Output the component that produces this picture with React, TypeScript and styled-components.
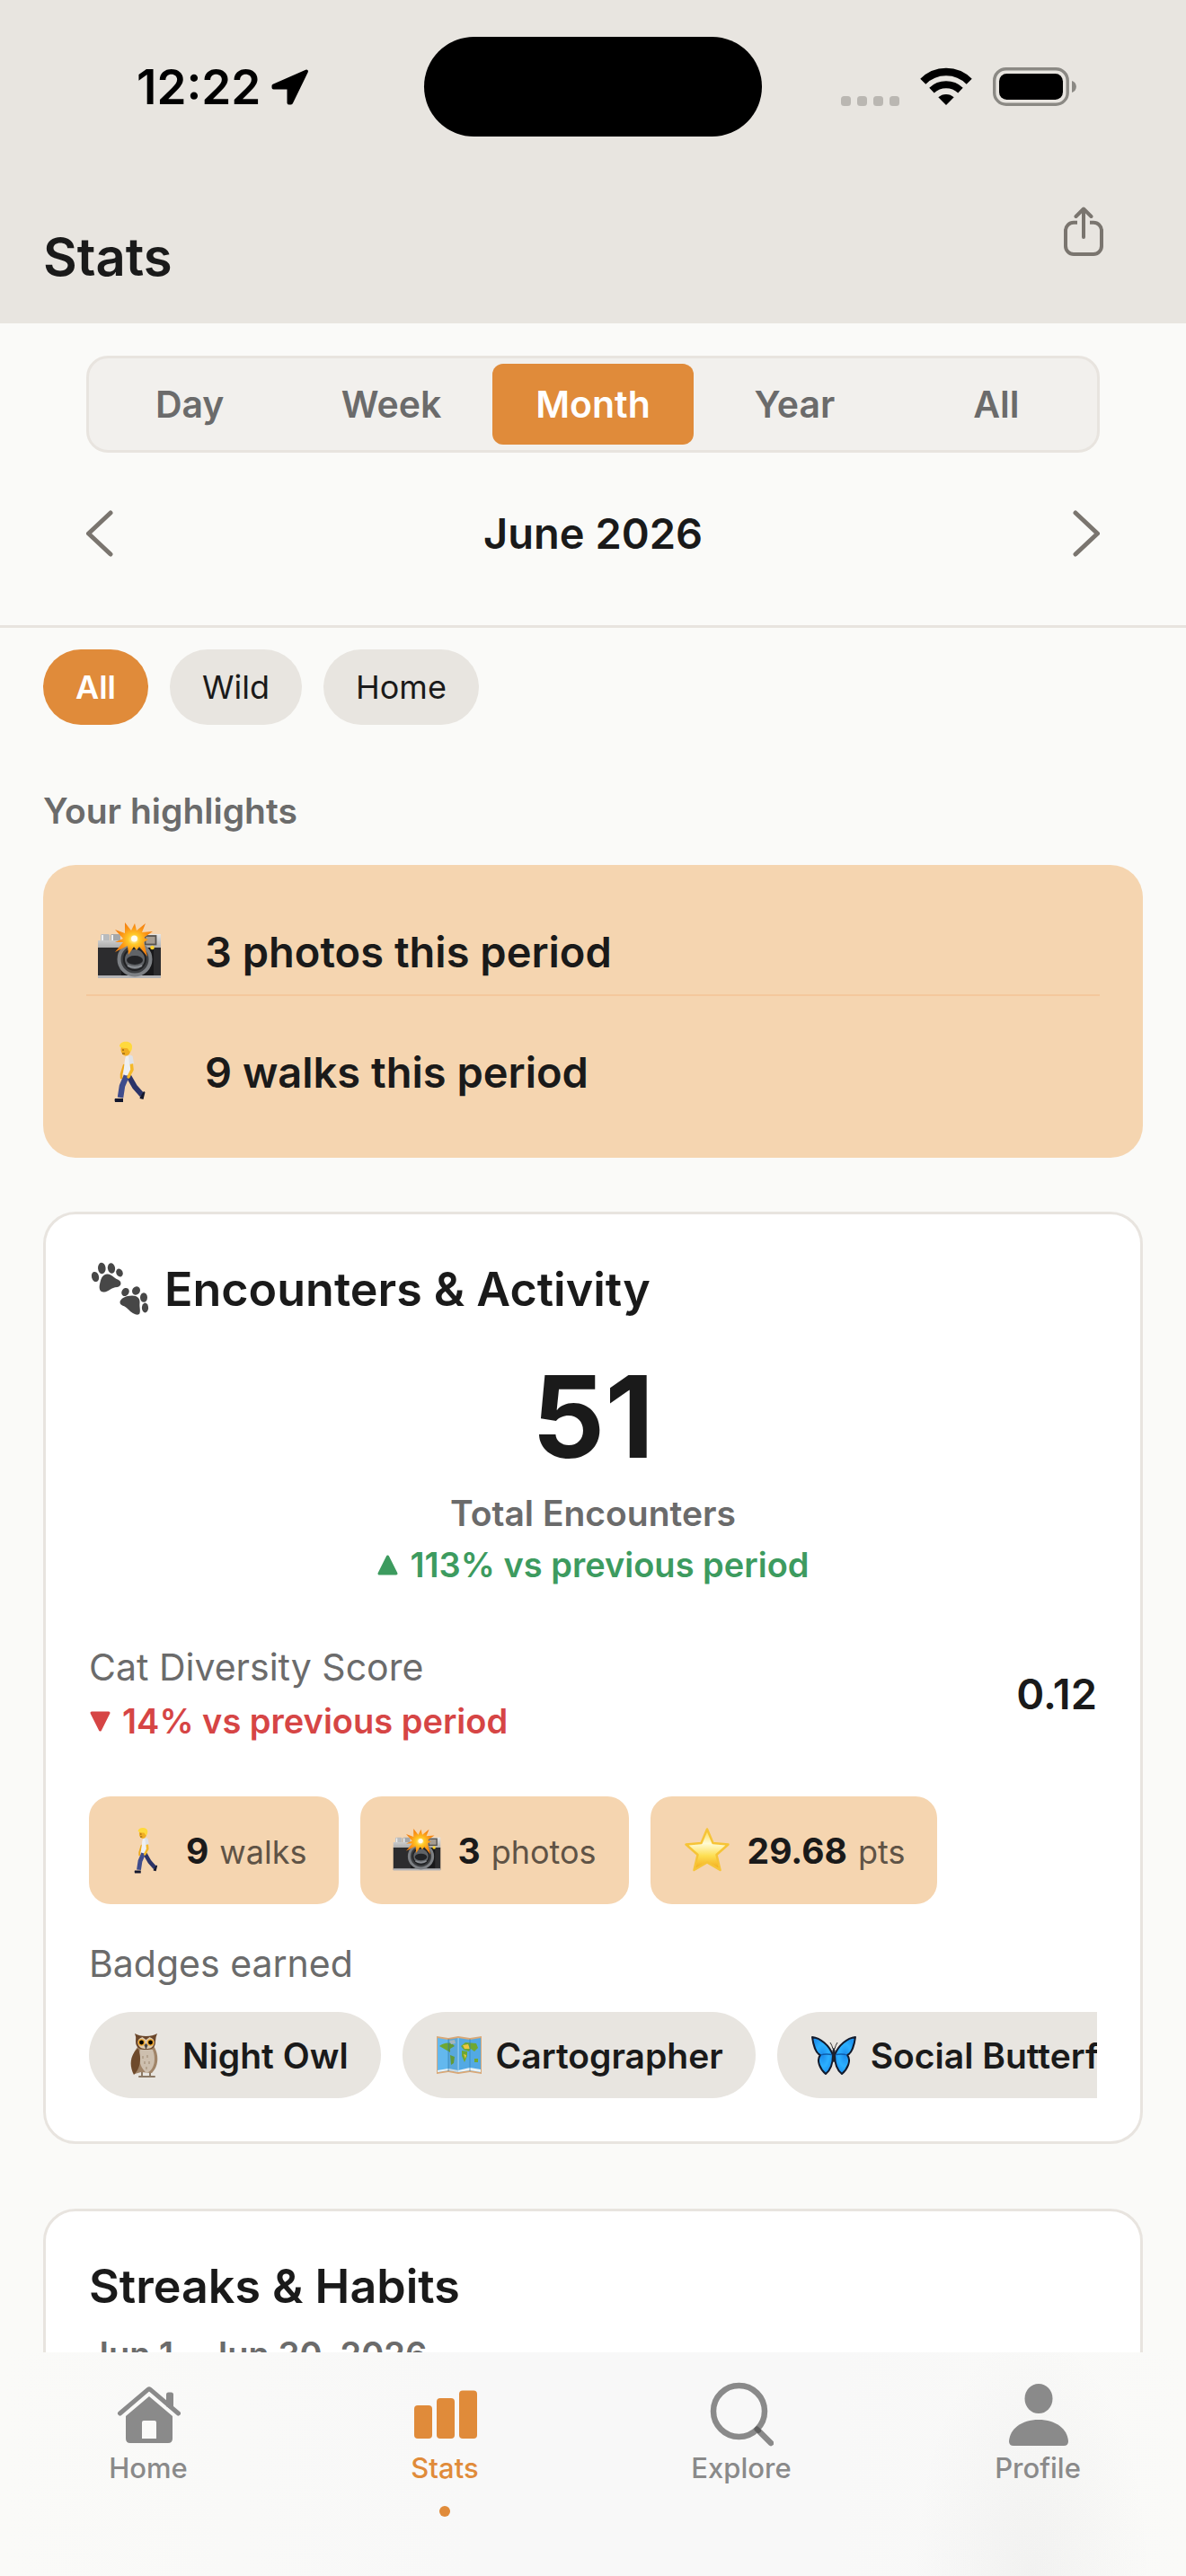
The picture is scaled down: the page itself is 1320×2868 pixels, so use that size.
import React, { useState } from "react";
import styled, { createGlobalStyle } from "styled-components";

const color = {
  page: "#fafaf8",
  bar: "#e8e5e0",
  line: "#e8e4df",
  track: "#f2f0ed",
  ink: "#1a1a1a",
  muted: "#6b6b6b",
  stone: "#7a756f",
  accent: "#e08b3a",
  peach: "#f5d5b0",
  tab: "#8a8a8a",
  up: "#3d9b5f",
  down: "#d64545",
};

const GlobalStyle = createGlobalStyle`
  * { box-sizing: border-box; }
  body {
    margin: 0;
    background: ${color.page};
    color: ${color.ink};
    font-family: Inter, "Liberation Sans", sans-serif;
  }
  button { font: inherit; border: 0; padding: 0; background: none; cursor: pointer; }
  h1, h2, p, ul { margin: 0; padding: 0; }
  ul { list-style: none; }
  svg { display: block; flex: none; }
`;

const Screen = styled.div`
  display: flex;
  flex-direction: column;
  height: 100vh;
`;

const StatusBar = styled.div`
  display: grid;
  grid-template-columns: 1fr 376px 1fr;
  align-items: center;
  padding-top: 41px;
  background: ${color.bar};
  color: #000;
`;

const Clock = styled.div`
  display: flex;
  align-items: center;
  gap: 12px;
  padding-left: 152px;
  font-size: 53px;
  line-height: 60px;
  font-weight: 600;
`;

const Island = styled.div`
  height: 111px;
  border-radius: 56px;
  background: #000;
`;

const StatusIcons = styled.div`
  display: flex;
  align-items: flex-end;
  justify-content: flex-end;
  gap: 23px;
  padding-right: 122px;
`;

const Header = styled.header`
  display: flex;
  justify-content: space-between;
  padding: 64px 72px 38px 48px;
  background: ${color.bar};
`;

const PageTitle = styled.h1`
  padding-top: 34px;
  font-size: 58px;
  line-height: 72px;
  font-weight: 600;
`;

const ShareButton = styled.button`
  display: grid;
  place-items: center;
  width: 84px;
  height: 84px;
  color: ${color.stone};
`;

const Scroll = styled.main`
  flex: 1;
  min-height: 0;
  overflow-y: auto;
  scrollbar-width: none;
`;

const PeriodPanel = styled.section`
  padding: 36px 96px 66px;
  border-bottom: 3px solid ${color.line};
`;

const Segments = styled.div`
  display: grid;
  grid-template-columns: repeat(5, 1fr);
  padding: 6px 0;
  border: 3px solid ${color.line};
  border-radius: 24px;
  background: ${color.track};
`;

const Segment = styled.button<{ $on: boolean }>`
  border-radius: 12px;
  font-size: 41px;
  line-height: 90px;
  font-weight: 600;
  color: ${(p) => (p.$on ? "#fff" : color.muted)};
  background: ${(p) => (p.$on ? color.accent : "transparent")};
`;

const PeriodNav = styled.div`
  display: flex;
  align-items: center;
  justify-content: space-between;
  margin-top: 54px;
  font-size: 47px;
  line-height: 72px;
  font-weight: 600;
`;

const StepButton = styled.button`
  color: ${color.stone};
`;

const Filters = styled.div`
  display: flex;
  gap: 24px;
  padding: 24px 48px 72px;
`;

const FilterChip = styled.button<{ $on: boolean }>`
  padding: 0 36px;
  border-radius: 42px;
  font-size: 36px;
  line-height: 84px;
  font-weight: ${(p) => (p.$on ? 600 : 400)};
  color: ${(p) => (p.$on ? "#fff" : color.ink)};
  background: ${(p) => (p.$on ? color.accent : color.bar)};
`;

const SectionLabel = styled.h2`
  padding: 0 48px;
  font-size: 39px;
  line-height: 48px;
  font-weight: 600;
  color: ${color.muted};
`;

const Highlights = styled.ul`
  display: grid;
  gap: 36px;
  margin: 36px 48px 60px;
  padding: 48px;
  border-radius: 36px;
  background: ${color.peach};
`;

const Highlight = styled.li`
  display: flex;
  align-items: center;
  gap: 36px;
  height: 96px;
  font-size: 47px;
  font-weight: 600;

  &:not(:last-child) {
    height: 98px;
    border-bottom: 2px solid #f4c89c;
  }
`;

const HighlightIcon = styled.span`
  display: grid;
  place-items: center;
  width: 96px;
`;

const Card = styled.section`
  margin: 0 48px 72px;
  padding: 48px;
  border: 3px solid ${color.line};
  border-radius: 36px;
  background: #fff;
`;

const CardTitle = styled.h2`
  display: flex;
  align-items: center;
  gap: 12px;
  font-size: 52px;
  line-height: 72px;
  font-weight: 600;
`;

const Total = styled.div`
  display: flex;
  flex-direction: column;
  align-items: center;
  margin: 30px 0 60px;
`;

const TotalNumber = styled.strong`
  font-size: 127px;
  line-height: 150px;
  font-weight: 700;
`;

const TotalLabel = styled.span`
  margin: 6px 0 3px;
  font-size: 39px;
  line-height: 54px;
  font-weight: 600;
  color: ${color.muted};
`;

const Change = styled.span<{ $up?: boolean }>`
  display: flex;
  align-items: center;
  gap: 12px;
  font-size: 38px;
  line-height: 54px;
  font-weight: 600;
  color: ${(p) => (p.$up ? color.up : color.down)};
`;

const ScoreRow = styled.div`
  display: flex;
  align-items: center;
  justify-content: space-between;
  margin-bottom: 57px;
`;

const ScoreText = styled.div`
  display: grid;
  gap: 6px;
`;

const SoftLabel = styled.p`
  font-size: 41px;
  line-height: 54px;
  color: ${color.muted};
`;

const ScoreValue = styled.strong`
  font-size: 47px;
  line-height: 54px;
  font-weight: 600;
`;

const StatPills = styled.ul`
  display: flex;
  gap: 24px;
  margin-bottom: 39px;
`;

const StatPill = styled.li`
  display: flex;
  align-items: center;
  gap: 18px;
  height: 120px;
  padding: 0 36px;
  border-radius: 24px;
  font-size: 36px;
  background: ${color.peach};
`;

const PillText = styled.span`
  display: flex;
  align-items: baseline;
  gap: 12px;
  color: #5f5346;
`;

const PillNumber = styled.strong`
  font-size: 39px;
  font-weight: 700;
  color: ${color.ink};
`;

const Badges = styled.ul`
  display: flex;
  gap: 24px;
  margin-top: 27px;
  overflow-x: auto;
  scrollbar-width: none;
`;

const Badge = styled.li`
  display: flex;
  flex: none;
  align-items: center;
  gap: 14px;
  height: 96px;
  padding: 0 36px;
  border-radius: 48px;
  font-size: 39px;
  font-weight: 600;
  white-space: nowrap;
  background: ${color.bar};
`;

const DateRange = styled.p`
  margin-top: 12px;
  font-size: 38px;
  line-height: 54px;
  font-weight: 600;
  color: ${color.muted};
`;

const TabBar = styled.nav`
  display: grid;
  grid-template-columns: repeat(4, 1fr);
  height: 249px;
  padding-top: 33px;
  background:
    radial-gradient(ellipse 10% 110% at 87% 100%, rgba(120, 120, 120, 0.06), transparent),
    linear-gradient(90deg, #fafaf8, #f8f8f8 40%, #f8f8f8 70%, #fafaf8);
`;

const Tab = styled.a<{ $on: boolean }>`
  display: flex;
  flex-direction: column;
  align-items: center;
  gap: 6px;
  font-size: 31px;
  line-height: 36px;
  font-weight: 500;
  text-decoration: none;
  color: ${(p) => (p.$on ? color.accent : color.tab)};
`;

const TabDot = styled.span`
  width: 12px;
  height: 12px;
  margin-top: 18px;
  border-radius: 6px;
  background: ${color.accent};
`;

const LocationArrow = () => (
  <svg width="42" height="40" viewBox="0 0 42 40" aria-hidden="true">
    <path d="M39 2.500 2.500 18.500v2H19.500V37.500h2.500Z" fill="#000" stroke="#000" strokeWidth="4" strokeLinejoin="round" />
  </svg>
);

const SignalDots = () => (
  <svg width="65" height="11" viewBox="0 0 65 11" fill="#bab7b2" aria-hidden="true">
    {[0, 18, 36, 54].map((x) => (
      <rect key={x} x={x} width="11" height="11" rx="3.500" />
    ))}
  </svg>
);

const Wifi = () => (
  <svg width="58" height="43" viewBox="0 0 58 43" fill="none" stroke="#000" aria-hidden="true">
    <path d="M3.300 15.700A36 36 0 0 1 54.700 15.700" strokeWidth="8.500" />
    <path d="M13 25.600A23.500 23.500 0 0 1 45 25.600" strokeWidth="8" />
    <path d="M29 42 20.300 33.300A13 13 0 0 1 37.700 33.300Z" fill="#000" stroke="none" />
  </svg>
);

const Battery = () => (
  <svg width="93" height="43" viewBox="0 0 93 43" aria-hidden="true">
    <rect x="1.700" y="1.700" width="81.500" height="39.500" rx="13" fill="none" stroke="#8b8984" strokeWidth="3.400" />
    <rect x="7" y="7" width="71" height="29" rx="8.500" />
    <path d="M88 15c6.500 2 6.500 11 0 13Z" fill="#8b8984" />
  </svg>
);

const ShareIcon = () => (
  <svg width="44" height="56" viewBox="0 0 44 56" fill="none" stroke="currentColor" strokeWidth="4" aria-hidden="true">
    <path d="M15 17.700h-4a9 9 0 0 0-9 9V44a9 9 0 0 0 9 9h22a9 9 0 0 0 9-9V26.700a9 9 0 0 0-9-9h-4" />
    <path d="M22 3v31M13.500 11 22 2.500 30.500 11" strokeLinecap="round" strokeLinejoin="round" />
  </svg>
);

const Chevron = ({ back }: { back?: boolean }) => (
  <svg width="32" height="54" viewBox="0 0 32 54" fill="none" stroke="currentColor" strokeWidth="5" strokeLinecap="round" strokeLinejoin="round" aria-hidden="true">
    <path d={back ? "M27 4 2.500 27 27 50" : "M5 4 29.500 27 5 50"} />
  </svg>
);

const Triangle = ({ up }: { up?: boolean }) => (
  <svg width="25" height="25" viewBox="0 0 25 25" fill="currentColor" stroke="currentColor" strokeWidth="3" strokeLinejoin="round" aria-hidden="true">
    <path d={up ? "M12.500 3 22 22H3Z" : "M3 3h19L12.500 22Z"} />
  </svg>
);

type ArtProps = { size: number };

const CameraArt = ({ size }: ArtProps) => (
  <svg width={size} height={size} viewBox="0 0 72 72" role="img" aria-label="Camera">
    <defs>
      <linearGradient id="silver" x1="0" y1="0" x2="0" y2="1">
        <stop offset="0" stopColor="#e6e6e6" />
        <stop offset="1" stopColor="#a9a9a9" />
      </linearGradient>
      <radialGradient id="burst">
        <stop offset="0" stopColor="#fffbd0" />
        <stop offset=".3" stopColor="#ffc928" />
        <stop offset=".7" stopColor="#fb9515" />
        <stop offset="1" stopColor="#f4800f" />
      </radialGradient>
    </defs>
    <rect x="4" y="17" width="10" height="8" rx="1.500" fill="#b9bbbd" />
    <rect x="15" y="17" width="11" height="8" rx="1.500" fill="#a5a7a9" />
    <path d="M6 18v6M17 18v6" stroke="#eee" strokeWidth="2" />
    <path d="M1 24h50v-7h20v16H1Z" fill="url(#silver)" />
    <rect x="1" y="32" width="70" height="33" fill="#2c2c2e" />
    <path d="M27 32h36v33H27Z" fill="#18181a" />
    <rect x="1" y="63" width="70" height="3" fill="#b4b4b6" />
    <rect x="53.500" y="19" width="12" height="9.500" fill="#a69d92" stroke="#55524e" strokeWidth="1.800" />
    <circle cx="42" cy="45" r="17.500" fill="#3c3e41" stroke="#7d8084" strokeWidth="4" />
    <circle cx="42" cy="45" r="12" fill="#606367" stroke="#202123" strokeWidth="2" />
    <ellipse cx="42" cy="46" rx="9" ry="5" fill="#222326" />
    <path d="M34 52q8 4 16 0" stroke="#8b8f94" strokeWidth="2" fill="none" />
    <circle cx="61.500" cy="32" r="2.300" fill="#ffd230" />
    <path
      d="m31 4 7 9 4-8 2 8L54 5l-4 10 12-1-10 7 5 2-5 3 4 16-9-11-3 4-3-4-6 9-1-10-14 7 9-11-9 0 9-4-9-10 11 4Z"
      fill="url(#burst)"
    />
    <circle cx="41.500" cy="22" r="3.500" fill="#fffdf0" />
  </svg>
);

const WalkerArt = ({ size }: ArtProps) => (
  <svg width={size} height={size} viewBox="0 0 72 72" role="img" aria-label="Person walking">
    <path d="M34 39 42 53 50 62" stroke="#2c3468" strokeWidth="6" fill="none" strokeLinejoin="round" />
    <path d="M34 38 28 52 26 65" stroke="#3f4c8c" strokeWidth="6.500" fill="none" strokeLinejoin="round" />
    <path d="M20 66h9l0 4H20q-1-3 0-4ZM48 64l4-6 1.500 1-2 8-4-1Z" fill="#14182e" />
    <path d="m30 29-3 10 0 4" stroke="#eda91c" strokeWidth="2.500" fill="none" strokeLinecap="round" />
    <path d="M32 19q7-2 8 5l-1 15q-5 3-10 0l2-16Z" fill="#eef0f3" />
    <path d="m38 25 1 9-4 8" stroke="#f5b929" strokeWidth="3.500" fill="none" strokeLinecap="round" strokeLinejoin="round" />
    <path d="M35 18q5-1 5 3l1 6-5 1Z" fill="#dfe2e7" />
    <ellipse cx="32" cy="11.500" rx="5.500" ry="7" fill="#f0ae22" />
    <path d="M25 8c0-7 14-7 14 0 0 4-1 5-2 6-2-1-2-4-4-4s-6 0-8-2Z" fill="#ffd93c" />
    <path d="M28 12h2M28 16h3" stroke="#7a4a10" strokeWidth="1.200" />
  </svg>
);

const StarArt = ({ size }: ArtProps) => (
  <svg width={size} height={size} viewBox="0 0 54 54" role="img" aria-label="Star">
    <defs>
      <linearGradient id="gold" x1="0" y1="0" x2="0" y2="1">
        <stop offset="0" stopColor="#fbd94a" />
        <stop offset=".35" stopColor="#fffbd6" />
        <stop offset=".65" stopColor="#fddf52" />
        <stop offset="1" stopColor="#f2a516" />
      </linearGradient>
    </defs>
    <path
      d="m27 3.500 6.500 15.500 17 1.500-13 11.500 4 17L27 40.500 12.500 49l4-17-13-11.500 17-1.500Z"
      fill="url(#gold)"
      stroke="#f6c437"
      strokeWidth="2.500"
      strokeLinejoin="round"
    />
  </svg>
);

const PawsArt = ({ size }: ArtProps) => (
  <svg width={size} height={size} viewBox="19 20 72 72" fill="#474747" role="img" aria-label="Paw prints">
    <ellipse cx="26" cy="41.500" rx="4" ry="5.700" transform="rotate(-15 26 41.500)" />
    <ellipse cx="33.300" cy="32" rx="4.300" ry="6.200" transform="rotate(-5 33.300 32)" />
    <ellipse cx="44" cy="32" rx="4.100" ry="5.800" transform="rotate(-10 44 32)" />
    <ellipse cx="53" cy="37" rx="3.600" ry="4.600" transform="rotate(-25 53 37)" />
    <path d="M39 38.500c5-.500 7 4 12 6s4.500 7.500-.500 8.500c-7 .500-9.500 5-14.500 5.500s-6-4-5-8.500 2-11 8-11.500Z" />
    <ellipse cx="59.500" cy="58.500" rx="4" ry="4.800" transform="rotate(35 59.500 58.500)" />
    <ellipse cx="71.500" cy="57" rx="4.300" ry="4.900" transform="rotate(35 71.500 57)" />
    <ellipse cx="80" cy="64.500" rx="4" ry="5.300" />
    <ellipse cx="81.500" cy="76" rx="3.600" ry="5.400" />
    <path d="M67 62.500c6 0 9 3 8.500 8s1 8 0 11.500-8.500 1-12.500-4-9.500-4-9.500-8 6.500-7.500 13.500-7.500Z" />
  </svg>
);

const OwlArt = ({ size }: ArtProps) => (
  <svg width={size} height={size} viewBox="0 0 54 54" role="img" aria-label="Owl">
    <path d="M23 46v5M32 46v5M20 51h8M29 51h8" stroke="#8c7a66" strokeWidth="2" strokeLinecap="round" />
    <path d="M19 17C11 26 10 38 15 48l7-2 12 1c8-8 8-21 2-30Z" fill="#a08468" />
    <path d="M21 21c-3 10 0 20 7 26 9-3 11-16 7-26Z" fill="#cdbfae" />
    <path d="M18 20C9 28 9 40 14 49c7-7 9-18 5-29Z" fill="#6e4a2c" />
    <path d="M15 3q5 3 12.500 3T40 3q-2 4-2 9c0 7-4 9-10.500 9S16 19 16 12q1-5-1-9Z" fill="#6b472b" />
    <path d="m27.500 10 4-3q6 2 5 7c-1 5-5 6-9 6s-8-1-9-6q-1-5 5-7Z" fill="#dcc9ae" />
    <circle cx="22.500" cy="13" r="3.800" fill="#f0a52a" />
    <circle cx="32.500" cy="13" r="3.800" fill="#f0a52a" />
    <circle cx="22.500" cy="13" r="2.400" />
    <circle cx="32.500" cy="13" r="2.400" />
    <path d="m25.500 16 2-2 2 2-2 5Z" fill="#4b4542" />
    <path d="M24 28v3M29 27v3M26 34v3M31 34v3M28 40v3" stroke="#a8957f" strokeWidth="1.300" />
  </svg>
);

const MapArt = ({ size }: ArtProps) => (
  <svg width={size} height={size} viewBox="0 0 54 54" role="img" aria-label="World map">
    <path d="m2 6 13 2 11-2 13 2 13-2v42l-13-2-13 2-11-2-13 2Z" fill="#d9a877" />
    <path d="m3 8 12 2 11-2v38l-11-2-12 2Z" fill="#63b8ee" />
    <path d="m26 8 13 2 12-2v38l-12-2-13 2Z" fill="#52a9e4" />
    <path d="M5 17q6-5 14-3l3 3-5 3 0 4-5-3ZM17 27l5 2-1 7-3 2ZM29 17l5-4 12 1 2 5-4 4-4-3-2 3-6-2ZM30 22l6 1 0 5-3 7-3-7ZM44 31h4l0 4h-4Z" fill="#6fa832" />
    <path d="M31 16l6-1 2 5-6 0ZM32 26l3 1-1 4Z" fill="#efc640" />
    <path d="M16 11l6-1 1 4-5 1Z" fill="#b9c6cc" />
    <path d="m3 44 12-2 11 2 13-3 12 2v3l-12-2-13 2-11-2-12 2Z" fill="#e9f2f6" />
    <path d="M15 9v36M39 9v36" stroke="#2f7fb5" strokeOpacity=".55" strokeWidth="1.200" />
    <path d="M26 8v38" stroke="#b9e2fa" strokeOpacity=".8" strokeWidth="1.200" />
    <path d="M15 9l11-1v38l-11-2Z" fill="#123c5c" fillOpacity=".12" />
  </svg>
);

const ButterflyArt = ({ size }: ArtProps) => (
  <svg width={size} height={size} viewBox="0 0 54 54" role="img" aria-label="Butterfly">
    <defs>
      <radialGradient id="wing">
        <stop offset="0" stopColor="#1b8cec" />
        <stop offset=".6" stopColor="#2bb0ff" />
        <stop offset="1" stopColor="#1e94f0" />
      </radialGradient>
    </defs>
    <g fill="url(#wing)" stroke="#121a2c" strokeWidth="2" strokeLinejoin="round">
      <path d="M26 27C22 16 12 8 3 7c1 8 4 18 9 20-5 6 0 16 6 21 5-4 8-12 8-21Z" />
      <path d="M28 27C32 16 42 8 51 7c-1 8-4 18-9 20 5 6 0 16-6 21-5-4-8-12-8-21Z" />
    </g>
    <path d="M12 27q7-2 14 0M42 27q-7-2-14 0" stroke="#0e5dac" strokeWidth="1.300" fill="none" />
    <path d="M26 20q-1-4-3-7M28 20q1-4 3-7" stroke="#333" strokeWidth="1" fill="none" />
    <ellipse cx="27" cy="27" rx="1.800" ry="8" fill="#1d222d" />
  </svg>
);

const HomeIcon = () => (
  <svg width="72" height="72" viewBox="0 0 72 72" fill="currentColor" aria-hidden="true">
    <path d="M4.500 35 36 8.200Q37 7.500 38 8.200L69.500 35" fill="none" stroke="currentColor" strokeWidth="5" strokeLinecap="round" />
    <path d="M56 27V14q0-2.500 2.500-2.500h3q2.500 0 2.500 2.500v18Z" />
    <path fillRule="evenodd" d="M37 16 63 38v25q0 5-5 5H16q-5 0-5-5V38ZM29 45v18h16V45q0-2-2-2H31q-2 0-2 2Z" />
  </svg>
);

const StatsIcon = () => (
  <svg width="72" height="72" viewBox="0 0 72 72" fill="currentColor" aria-hidden="true">
    <rect x="2" y="26" width="20" height="37" rx="4" />
    <rect x="27" y="18" width="20" height="45" rx="4" />
    <rect x="52" y="9.500" width="20" height="53.500" rx="4" />
  </svg>
);

const ExploreIcon = () => (
  <svg width="72" height="72" viewBox="0 0 72 72" fill="none" stroke="currentColor" strokeWidth="6.500" strokeLinecap="round" aria-hidden="true">
    <circle cx="33.500" cy="32.500" r="28.500" />
    <path d="m54 53 15 15" />
    <path d="m53.500 52.500 1.500 1.500" stroke="#5f5f5f" strokeWidth="6" />
  </svg>
);

const ProfileIcon = () => (
  <svg width="72" height="72" viewBox="0 0 72 72" fill="currentColor" aria-hidden="true">
    <ellipse cx="37" cy="18.500" rx="15.500" ry="16.500" />
    <path d="M4 66c1-14 14-24 33-24s32 10 33 24q0 5-5 5H9q-5 0-5-5Z" />
  </svg>
);

const periods = ["Day", "Week", "Month", "Year", "All"];
const filters = ["All", "Wild", "Home"];

const highlights = [
  { art: CameraArt, text: "3 photos this period" },
  { art: WalkerArt, text: "9 walks this period" },
];

const pills = [
  { art: WalkerArt, value: "9", unit: "walks" },
  { art: CameraArt, value: "3", unit: "photos" },
  { art: StarArt, value: "29.68", unit: "pts" },
];

const badges = [
  { art: OwlArt, name: "Night Owl" },
  { art: MapArt, name: "Cartographer" },
  { art: ButterflyArt, name: "Social Butterfly" },
];

const tabs = [
  { name: "Home", icon: HomeIcon },
  { name: "Stats", icon: StatsIcon },
  { name: "Explore", icon: ExploreIcon },
  { name: "Profile", icon: ProfileIcon },
];

export default function App() {
  const [period, setPeriod] = useState("Month");
  const [filter, setFilter] = useState("All");

  return (
    <Screen>
      <GlobalStyle />
      <StatusBar>
        <Clock>
          12:22
          <LocationArrow />
        </Clock>
        <Island />
        <StatusIcons>
          <SignalDots />
          <Wifi />
          <Battery />
        </StatusIcons>
      </StatusBar>

      <Header>
        <PageTitle>Stats</PageTitle>
        <ShareButton aria-label="Share">
          <ShareIcon />
        </ShareButton>
      </Header>

      <Scroll>
        <PeriodPanel>
          <Segments role="group" aria-label="Period">
            {periods.map((name) => (
              <Segment key={name} $on={name === period} aria-pressed={name === period} onClick={() => setPeriod(name)}>
                {name}
              </Segment>
            ))}
          </Segments>
          <PeriodNav>
            <StepButton aria-label="Previous month">
              <Chevron back />
            </StepButton>
            June 2026
            <StepButton aria-label="Next month">
              <Chevron />
            </StepButton>
          </PeriodNav>
        </PeriodPanel>

        <Filters>
          {filters.map((name) => (
            <FilterChip key={name} $on={name === filter} aria-pressed={name === filter} onClick={() => setFilter(name)}>
              {name}
            </FilterChip>
          ))}
        </Filters>

        <SectionLabel>Your highlights</SectionLabel>
        <Highlights>
          {highlights.map(({ art: Art, text }) => (
            <Highlight key={text}>
              <HighlightIcon>
                <Art size={72} />
              </HighlightIcon>
              {text}
            </Highlight>
          ))}
        </Highlights>

        <Card>
          <CardTitle>
            <PawsArt size={72} />
            Encounters &amp; Activity
          </CardTitle>
          <Total>
            <TotalNumber>51</TotalNumber>
            <TotalLabel>Total Encounters</TotalLabel>
            <Change $up>
              <Triangle up />
              113% vs previous period
            </Change>
          </Total>
          <ScoreRow>
            <ScoreText>
              <SoftLabel>Cat Diversity Score</SoftLabel>
              <Change>
                <Triangle />
                14% vs previous period
              </Change>
            </ScoreText>
            <ScoreValue>0.12</ScoreValue>
          </ScoreRow>
          <StatPills>
            {pills.map(({ art: Art, value, unit }) => (
              <StatPill key={unit}>
                <Art size={54} />
                <PillText>
                  <PillNumber>{value}</PillNumber>
                  {unit}
                </PillText>
              </StatPill>
            ))}
          </StatPills>
          <SoftLabel>Badges earned</SoftLabel>
          <Badges>
            {badges.map(({ art: Art, name }) => (
              <Badge key={name}>
                <Art size={54} />
                {name}
              </Badge>
            ))}
          </Badges>
        </Card>

        <Card>
          <CardTitle>Streaks &amp; Habits</CardTitle>
          <DateRange>Jun 1 – Jun 30, 2026</DateRange>
        </Card>
      </Scroll>

      <TabBar aria-label="Main">
        {tabs.map(({ name, icon: Icon }) => (
          <Tab key={name} href={`#${name.toLowerCase()}`} $on={name === "Stats"}>
            <Icon />
            {name}
            {name === "Stats" && <TabDot />}
          </Tab>
        ))}
      </TabBar>
    </Screen>
  );
}
